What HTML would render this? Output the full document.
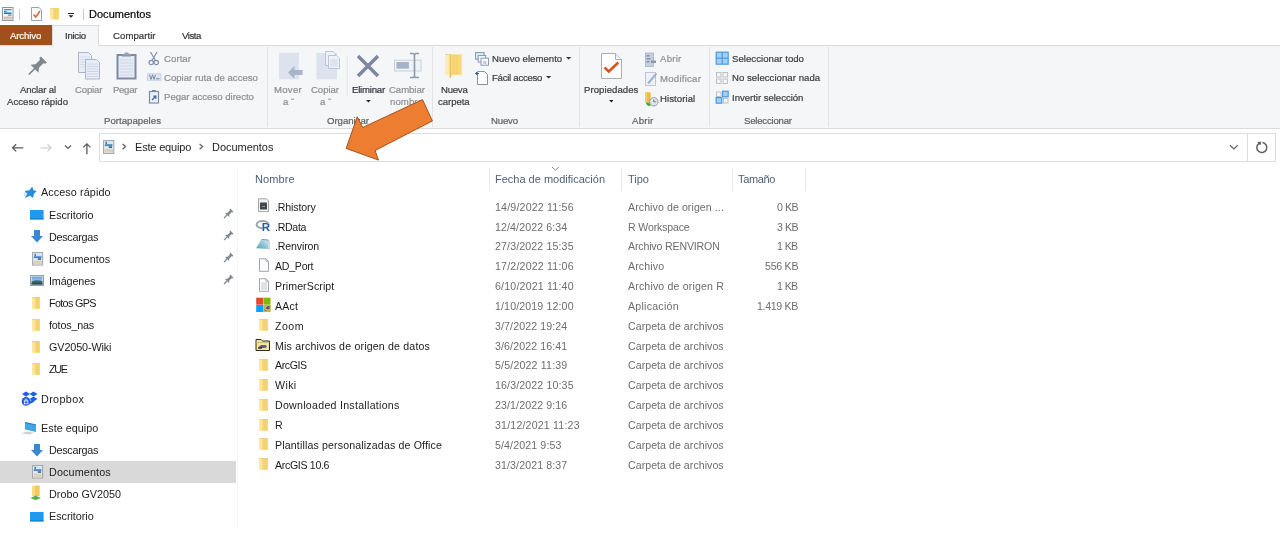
<!DOCTYPE html>
<html><head><meta charset="utf-8"><style>
html,body{margin:0;padding:0;width:1280px;height:538px;overflow:hidden;background:#fff;}
body{position:relative;font-family:"Liberation Sans",sans-serif;}
.t{position:absolute;white-space:nowrap;will-change:transform;}
.s{-webkit-text-stroke:0.2px currentColor;}
.r{position:absolute;}
</style></head><body>
<div class="r" style="left:0px;top:45px;width:1280px;height:83px;background:#f5f6f7;"></div>
<div class="r" style="left:0px;top:45px;width:1280px;height:1px;background:#dadbdc;"></div>
<div class="r" style="left:0px;top:128px;width:1280px;height:1px;background:#dadbdc;"></div>
<div class="r" style="left:52px;top:25px;width:47px;height:21px;background:#f5f6f7;border:1px solid #dadbdc;border-bottom:none;box-sizing:border-box;"></div>
<div class="r" style="left:0px;top:25px;width:52px;height:20px;background:#a0501d;"></div>
<div class="r" style="left:267px;top:47px;width:1px;height:80px;background:#e2e3e4;"></div>
<div class="r" style="left:432px;top:47px;width:1px;height:80px;background:#e2e3e4;"></div>
<div class="r" style="left:579px;top:47px;width:1px;height:80px;background:#e2e3e4;"></div>
<div class="r" style="left:709px;top:47px;width:1px;height:80px;background:#e2e3e4;"></div>
<div class="r" style="left:828px;top:47px;width:1px;height:80px;background:#e2e3e4;"></div>
<div class="r" style="left:19px;top:9px;width:1px;height:11px;background:#c9c9c9;"></div>
<div class="r" style="left:83px;top:9px;width:1px;height:11px;background:#c9c9c9;"></div>
<div class="r" style="left:99px;top:133px;width:1177px;height:29px;background:#fff;border:1px solid #dedede;box-sizing:border-box;"></div>
<div class="r" style="left:1247px;top:133px;width:1px;height:29px;background:#dedede;"></div>
<div class="r" style="left:0px;top:461px;width:236px;height:22px;background:#d9d9d9;"></div>
<div class="r" style="left:237px;top:168px;width:1px;height:360px;background:#f5f5f5;"></div>
<div class="r" style="left:489px;top:168px;width:1px;height:23px;background:#ebebeb;"></div>
<div class="r" style="left:621px;top:168px;width:1px;height:23px;background:#ebebeb;"></div>
<div class="r" style="left:732px;top:168px;width:1px;height:23px;background:#ebebeb;"></div>
<div class="r" style="left:805px;top:168px;width:1px;height:23px;background:#ebebeb;"></div>
<div class="t s" style="left:89.40px;top:7.69px;font-size:11px;line-height:13.2px;color:#000;letter-spacing:0.026px;">Documentos</div>
<div class="t s" style="left:10.00px;top:29.61px;font-size:9.6px;line-height:11.52px;color:#fff;letter-spacing:-0.119px;">Archivo</div>
<div class="t s" style="left:64.80px;top:29.61px;font-size:9.6px;line-height:11.52px;color:#333;letter-spacing:-0.263px;">Inicio</div>
<div class="t s" style="left:112.60px;top:29.61px;font-size:9.6px;line-height:11.52px;color:#333;letter-spacing:0.057px;">Compartir</div>
<div class="t s" style="left:181.90px;top:29.61px;font-size:9.6px;line-height:11.52px;color:#333;letter-spacing:-0.429px;">Vista</div>
<div class="t s" style="left:19.80px;top:83.91px;font-size:9.6px;line-height:11.52px;color:#3b3b3b;letter-spacing:-0.143px;">Anclar al</div>
<div class="t s" style="left:7.00px;top:95.91px;font-size:9.6px;line-height:11.52px;color:#3b3b3b;letter-spacing:0.015px;">Acceso rápido</div>
<div class="t s" style="left:75.00px;top:83.91px;font-size:9.6px;line-height:11.52px;color:#8e8e8e;letter-spacing:-0.174px;">Copiar</div>
<div class="t s" style="left:113.00px;top:83.91px;font-size:9.6px;line-height:11.52px;color:#8e8e8e;letter-spacing:-0.308px;">Pegar</div>
<div class="t s" style="left:163.80px;top:52.91px;font-size:9.6px;line-height:11.52px;color:#8e8e8e;letter-spacing:0.062px;">Cortar</div>
<div class="t s" style="left:163.80px;top:72.41px;font-size:9.6px;line-height:11.52px;color:#8e8e8e;letter-spacing:0.003px;">Copiar ruta de acceso</div>
<div class="t s" style="left:163.80px;top:91.41px;font-size:9.6px;line-height:11.52px;color:#8e8e8e;letter-spacing:-0.010px;">Pegar acceso directo</div>
<div class="t s" style="left:104.20px;top:114.91px;font-size:9.6px;line-height:11.52px;color:#5e5e5e;letter-spacing:0.037px;">Portapapeles</div>
<div class="t s" style="left:274.00px;top:83.91px;font-size:9.6px;line-height:11.52px;color:#8e8e8e;letter-spacing:0.253px;">Mover</div>
<div class="t s" style="left:282.70px;top:95.91px;font-size:9.6px;line-height:11.52px;color:#8e8e8e;">a ˇ</div>
<div class="t s" style="left:311.00px;top:83.91px;font-size:9.6px;line-height:11.52px;color:#8e8e8e;letter-spacing:-0.054px;">Copiar</div>
<div class="t s" style="left:319.50px;top:95.91px;font-size:9.6px;line-height:11.52px;color:#8e8e8e;">a ˇ</div>
<div class="t s" style="left:351.60px;top:83.91px;font-size:9.6px;line-height:11.52px;color:#2f2f3a;letter-spacing:-0.208px;">Eliminar</div>
<div class="t s" style="left:389.00px;top:83.91px;font-size:9.6px;line-height:11.52px;color:#8e8e8e;letter-spacing:-0.065px;">Cambiar</div>
<div class="t s" style="left:390.00px;top:95.91px;font-size:9.6px;line-height:11.52px;color:#8e8e8e;letter-spacing:0.091px;">nombre</div>
<div class="t s" style="left:327.00px;top:114.91px;font-size:9.6px;line-height:11.52px;color:#5e5e5e;letter-spacing:-0.018px;">Organizar</div>
<div class="t s" style="left:440.60px;top:83.91px;font-size:9.6px;line-height:11.52px;color:#3b3b3b;letter-spacing:-0.248px;">Nueva</div>
<div class="t s" style="left:438.00px;top:95.91px;font-size:9.6px;line-height:11.52px;color:#3b3b3b;letter-spacing:-0.061px;">carpeta</div>
<div class="t s" style="left:491.80px;top:52.91px;font-size:9.6px;line-height:11.52px;color:#3b3b3b;letter-spacing:0.024px;">Nuevo elemento</div>
<div class="t s" style="left:491.80px;top:72.41px;font-size:9.6px;line-height:11.52px;color:#3b3b3b;letter-spacing:-0.261px;">Fácil acceso</div>
<div class="t s" style="left:491.00px;top:114.91px;font-size:9.6px;line-height:11.52px;color:#5e5e5e;letter-spacing:-0.186px;">Nuevo</div>
<div class="t s" style="left:583.80px;top:83.91px;font-size:9.6px;line-height:11.52px;color:#3b3b3b;letter-spacing:0.050px;">Propiedades</div>
<div class="t s" style="left:659.80px;top:53.41px;font-size:9.6px;line-height:11.52px;color:#8e8e8e;letter-spacing:0.236px;">Abrir</div>
<div class="t s" style="left:659.80px;top:72.91px;font-size:9.6px;line-height:11.52px;color:#8e8e8e;letter-spacing:0.247px;">Modificar</div>
<div class="t s" style="left:659.80px;top:93.41px;font-size:9.6px;line-height:11.52px;color:#3b3b3b;letter-spacing:0.068px;">Historial</div>
<div class="t s" style="left:632.40px;top:114.91px;font-size:9.6px;line-height:11.52px;color:#5e5e5e;letter-spacing:0.236px;">Abrir</div>
<div class="t s" style="left:731.80px;top:52.91px;font-size:9.6px;line-height:11.52px;color:#3b3b3b;letter-spacing:0.032px;">Seleccionar todo</div>
<div class="t s" style="left:731.80px;top:72.41px;font-size:9.6px;line-height:11.52px;color:#3b3b3b;letter-spacing:0.036px;">No seleccionar nada</div>
<div class="t s" style="left:731.80px;top:92.21px;font-size:9.6px;line-height:11.52px;color:#3b3b3b;letter-spacing:-0.032px;">Invertir selección</div>
<div class="t s" style="left:743.80px;top:114.91px;font-size:9.6px;line-height:11.52px;color:#5e5e5e;letter-spacing:-0.216px;">Seleccionar</div>
<div class="t" style="left:134.70px;top:140.69px;font-size:11px;line-height:13.2px;color:#1e1e1e;letter-spacing:-0.178px;">Este equipo</div>
<div class="t" style="left:211.70px;top:140.69px;font-size:11px;line-height:13.2px;color:#1e1e1e;letter-spacing:-0.041px;">Documentos</div>
<div class="t" style="left:255.30px;top:172.79px;font-size:11px;line-height:13.2px;color:#4f5f75;letter-spacing:0.119px;">Nombre</div>
<div class="t" style="left:494.80px;top:172.79px;font-size:11px;line-height:13.2px;color:#4f5f75;letter-spacing:-0.003px;">Fecha de modificación</div>
<div class="t" style="left:627.80px;top:172.79px;font-size:11px;line-height:13.2px;color:#4f5f75;">Tipo</div>
<div class="t" style="left:738.00px;top:172.79px;font-size:11px;line-height:13.2px;color:#4f5f75;letter-spacing:-0.332px;">Tamaño</div>
<div class="t" style="left:275.00px;top:200.67px;font-size:10.6px;line-height:12.72px;color:#1b1b1b;letter-spacing:-0.127px;">.Rhistory</div>
<div class="t" style="left:495.20px;top:200.67px;font-size:10.6px;line-height:12.72px;color:#6d6d6d;letter-spacing:0.197px;">14/9/2022 11:56</div>
<div class="t" style="left:627.80px;top:200.67px;font-size:10.6px;line-height:12.72px;color:#6d6d6d;letter-spacing:0.081px;">Archivo de origen ...</div>
<div class="t" style="left:776.70px;top:200.67px;font-size:10.6px;line-height:12.72px;color:#6d6d6d;letter-spacing:-0.434px;">0 KB</div>
<div class="t" style="left:275.00px;top:220.52px;font-size:10.6px;line-height:12.72px;color:#1b1b1b;letter-spacing:-0.304px;">.RData</div>
<div class="t" style="left:495.20px;top:220.52px;font-size:10.6px;line-height:12.72px;color:#6d6d6d;letter-spacing:0.119px;">12/4/2022 6:34</div>
<div class="t" style="left:627.80px;top:220.52px;font-size:10.6px;line-height:12.72px;color:#6d6d6d;letter-spacing:-0.164px;">R Workspace</div>
<div class="t" style="left:776.70px;top:220.52px;font-size:10.6px;line-height:12.72px;color:#6d6d6d;letter-spacing:-0.434px;">3 KB</div>
<div class="t" style="left:275.00px;top:240.37px;font-size:10.6px;line-height:12.72px;color:#1b1b1b;letter-spacing:-0.146px;">.Renviron</div>
<div class="t" style="left:495.20px;top:240.37px;font-size:10.6px;line-height:12.72px;color:#6d6d6d;letter-spacing:0.140px;">27/3/2022 15:35</div>
<div class="t" style="left:627.80px;top:240.37px;font-size:10.6px;line-height:12.72px;color:#6d6d6d;letter-spacing:-0.156px;">Archivo RENVIRON</div>
<div class="t" style="left:777.20px;top:240.37px;font-size:10.6px;line-height:12.72px;color:#6d6d6d;letter-spacing:-0.601px;">1 KB</div>
<div class="t" style="left:275.00px;top:260.22px;font-size:10.6px;line-height:12.72px;color:#1b1b1b;letter-spacing:-0.245px;">AD_Port</div>
<div class="t" style="left:495.20px;top:260.22px;font-size:10.6px;line-height:12.72px;color:#6d6d6d;letter-spacing:0.197px;">17/2/2022 11:06</div>
<div class="t" style="left:627.80px;top:260.22px;font-size:10.6px;line-height:12.72px;color:#6d6d6d;letter-spacing:0.125px;">Archivo</div>
<div class="t" style="left:764.90px;top:260.22px;font-size:10.6px;line-height:12.72px;color:#6d6d6d;letter-spacing:-0.254px;">556 KB</div>
<div class="t" style="left:275.00px;top:280.07px;font-size:10.6px;line-height:12.72px;color:#1b1b1b;letter-spacing:0.091px;">PrimerScript</div>
<div class="t" style="left:495.20px;top:280.07px;font-size:10.6px;line-height:12.72px;color:#6d6d6d;letter-spacing:0.197px;">6/10/2021 11:40</div>
<div class="t" style="left:627.80px;top:280.07px;font-size:10.6px;line-height:12.72px;color:#6d6d6d;letter-spacing:0.154px;">Archivo de origen R</div>
<div class="t" style="left:777.20px;top:280.07px;font-size:10.6px;line-height:12.72px;color:#6d6d6d;letter-spacing:-0.601px;">1 KB</div>
<div class="t" style="left:275.00px;top:299.92px;font-size:10.6px;line-height:12.72px;color:#1b1b1b;letter-spacing:0.211px;">AAct</div>
<div class="t" style="left:495.20px;top:299.92px;font-size:10.6px;line-height:12.72px;color:#6d6d6d;letter-spacing:0.140px;">1/10/2019 12:00</div>
<div class="t" style="left:627.80px;top:299.92px;font-size:10.6px;line-height:12.72px;color:#6d6d6d;letter-spacing:0.252px;">Aplicación</div>
<div class="t" style="left:757.10px;top:299.92px;font-size:10.6px;line-height:12.72px;color:#6d6d6d;letter-spacing:-0.331px;">1.419 KB</div>
<div class="t" style="left:275.00px;top:319.77px;font-size:10.6px;line-height:12.72px;color:#1b1b1b;letter-spacing:0.506px;">Zoom</div>
<div class="t" style="left:495.20px;top:319.77px;font-size:10.6px;line-height:12.72px;color:#6d6d6d;letter-spacing:0.119px;">3/7/2022 19:24</div>
<div class="t" style="left:627.80px;top:319.77px;font-size:10.6px;line-height:12.72px;color:#6d6d6d;letter-spacing:0.046px;">Carpeta de archivos</div>
<div class="t" style="left:275.00px;top:339.62px;font-size:10.6px;line-height:12.72px;color:#1b1b1b;letter-spacing:0.178px;">Mis archivos de origen de datos</div>
<div class="t" style="left:495.20px;top:339.62px;font-size:10.6px;line-height:12.72px;color:#6d6d6d;letter-spacing:0.119px;">3/6/2022 16:41</div>
<div class="t" style="left:627.80px;top:339.62px;font-size:10.6px;line-height:12.72px;color:#6d6d6d;letter-spacing:0.046px;">Carpeta de archivos</div>
<div class="t" style="left:275.00px;top:359.47px;font-size:10.6px;line-height:12.72px;color:#1b1b1b;letter-spacing:-0.417px;">ArcGIS</div>
<div class="t" style="left:495.20px;top:359.47px;font-size:10.6px;line-height:12.72px;color:#6d6d6d;letter-spacing:0.180px;">5/5/2022 11:39</div>
<div class="t" style="left:627.80px;top:359.47px;font-size:10.6px;line-height:12.72px;color:#6d6d6d;letter-spacing:0.046px;">Carpeta de archivos</div>
<div class="t" style="left:275.00px;top:379.32px;font-size:10.6px;line-height:12.72px;color:#1b1b1b;letter-spacing:0.389px;">Wiki</div>
<div class="t" style="left:495.20px;top:379.32px;font-size:10.6px;line-height:12.72px;color:#6d6d6d;letter-spacing:0.140px;">16/3/2022 10:35</div>
<div class="t" style="left:627.80px;top:379.32px;font-size:10.6px;line-height:12.72px;color:#6d6d6d;letter-spacing:0.046px;">Carpeta de archivos</div>
<div class="t" style="left:275.00px;top:399.17px;font-size:10.6px;line-height:12.72px;color:#1b1b1b;letter-spacing:0.284px;">Downloaded Installations</div>
<div class="t" style="left:495.20px;top:399.17px;font-size:10.6px;line-height:12.72px;color:#6d6d6d;letter-spacing:0.119px;">23/1/2022 9:16</div>
<div class="t" style="left:627.80px;top:399.17px;font-size:10.6px;line-height:12.72px;color:#6d6d6d;letter-spacing:0.046px;">Carpeta de archivos</div>
<div class="t" style="left:275.00px;top:419.02px;font-size:10.6px;line-height:12.72px;color:#1b1b1b;">R</div>
<div class="t" style="left:495.20px;top:419.02px;font-size:10.6px;line-height:12.72px;color:#6d6d6d;letter-spacing:0.192px;">31/12/2021 11:23</div>
<div class="t" style="left:627.80px;top:419.02px;font-size:10.6px;line-height:12.72px;color:#6d6d6d;letter-spacing:0.046px;">Carpeta de archivos</div>
<div class="t" style="left:275.00px;top:438.87px;font-size:10.6px;line-height:12.72px;color:#1b1b1b;letter-spacing:0.151px;">Plantillas personalizadas de Office</div>
<div class="t" style="left:495.20px;top:438.87px;font-size:10.6px;line-height:12.72px;color:#6d6d6d;letter-spacing:0.132px;">5/4/2021 9:53</div>
<div class="t" style="left:627.80px;top:438.87px;font-size:10.6px;line-height:12.72px;color:#6d6d6d;letter-spacing:0.046px;">Carpeta de archivos</div>
<div class="t" style="left:275.00px;top:458.72px;font-size:10.6px;line-height:12.72px;color:#1b1b1b;letter-spacing:-0.322px;">ArcGIS 10.6</div>
<div class="t" style="left:495.20px;top:458.72px;font-size:10.6px;line-height:12.72px;color:#6d6d6d;letter-spacing:0.119px;">31/3/2021 8:37</div>
<div class="t" style="left:627.80px;top:458.72px;font-size:10.6px;line-height:12.72px;color:#6d6d6d;letter-spacing:0.046px;">Carpeta de archivos</div>
<div class="t" style="left:40.90px;top:186.48px;font-size:10.8px;line-height:12.96px;color:#1b1b1b;letter-spacing:0.090px;">Acceso rápido</div>
<div class="t" style="left:48.60px;top:208.58px;font-size:10.8px;line-height:12.96px;color:#1b1b1b;letter-spacing:-0.060px;">Escritorio</div>
<div class="t" style="left:48.60px;top:230.58px;font-size:10.8px;line-height:12.96px;color:#1b1b1b;letter-spacing:-0.291px;">Descargas</div>
<div class="t" style="left:48.60px;top:252.58px;font-size:10.8px;line-height:12.96px;color:#1b1b1b;letter-spacing:0.073px;">Documentos</div>
<div class="t" style="left:48.60px;top:274.58px;font-size:10.8px;line-height:12.96px;color:#1b1b1b;letter-spacing:-0.145px;">Imágenes</div>
<div class="t" style="left:48.50px;top:296.58px;font-size:10.8px;line-height:12.96px;color:#1b1b1b;letter-spacing:-0.676px;">Fotos GPS</div>
<div class="t" style="left:48.50px;top:318.58px;font-size:10.8px;line-height:12.96px;color:#1b1b1b;letter-spacing:-0.202px;">fotos_nas</div>
<div class="t" style="left:48.50px;top:340.58px;font-size:10.8px;line-height:12.96px;color:#1b1b1b;letter-spacing:-0.111px;">GV2050-Wiki</div>
<div class="t" style="left:48.50px;top:362.98px;font-size:10.8px;line-height:12.96px;color:#1b1b1b;letter-spacing:-1.350px;">ZUE</div>
<div class="t" style="left:41.20px;top:392.78px;font-size:10.8px;line-height:12.96px;color:#1b1b1b;letter-spacing:0.346px;">Dropbox</div>
<div class="t" style="left:41.20px;top:421.98px;font-size:10.8px;line-height:12.96px;color:#1b1b1b;letter-spacing:0.028px;">Este equipo</div>
<div class="t" style="left:48.50px;top:444.18px;font-size:10.8px;line-height:12.96px;color:#1b1b1b;letter-spacing:-0.278px;">Descargas</div>
<div class="t" style="left:48.50px;top:466.18px;font-size:10.8px;line-height:12.96px;color:#1b1b1b;letter-spacing:0.118px;">Documentos</div>
<div class="t" style="left:48.50px;top:488.18px;font-size:10.8px;line-height:12.96px;color:#1b1b1b;letter-spacing:0.006px;">Drobo GV2050</div>
<div class="t" style="left:48.50px;top:510.18px;font-size:10.8px;line-height:12.96px;color:#1b1b1b;letter-spacing:-0.037px;">Escritorio</div>
<svg class="r" style="left:2px;top:7px" width="12" height="14" viewBox="0 0 12 14"><rect x="0.5" y="0.5" width="10.5" height="13" fill="#f4f6f8" stroke="#8b96a3"/>
<rect x="2" y="2" width="7.5" height="1.3" fill="#3f8fd6"/><rect x="2" y="4" width="3" height="1.3" fill="#3f8fd6"/>
<rect x="2" y="5.5" width="7.5" height="1.5" fill="#2f6fb0"/><rect x="6" y="7.5" width="3.5" height="1.2" fill="#3f8fd6"/>
<rect x="1.5" y="9.5" width="8.5" height="3" fill="#cfc6bb"/></svg>
<svg class="r" style="left:31px;top:7px" width="12" height="15" viewBox="0 0 12 15"><path d="M0.5 0.5H8L10.5 3V13.5H0.5Z" fill="#fff" stroke="#9aa1a8"/>
<path d="M2.5 7.5L4.8 10L9 4" fill="none" stroke="#d9643a" stroke-width="1.6"/></svg>
<svg class="r" style="left:50px;top:8.4px" width="9.8" height="12" viewBox="0 0 9.8 12"><rect x="0" y="0.5" width="8.8" height="11" fill="#fce6a2"/>
<rect x="3.168" y="0.4" width="5.632000000000001" height="11" fill="#f6d574"/>
<rect x="0" y="0" width="8.8" height="1" fill="#eec766" opacity="0.7"/>
<rect x="5.28" y="1" width="0.7" height="10" fill="#efc65c" opacity="0.6"/></svg>
<svg class="r" style="left:67px;top:12px" width="8" height="7" viewBox="0 0 8 7"><rect x="1" y="1" width="6" height="1" fill="#222"/><path d="M1.5 3.2H6.5L4 5.8Z" fill="#222"/></svg>
<svg class="r" style="left:0;top:0" width="60" height="90" viewBox="0 0 60 90"><g transform="translate(36.4 66.9) rotate(45)" fill="#7b868f"><path d="M-4.2 -10.5L4.2 -10.5L4.2 -8.6L2.4 -7.4L2.4 -1.2L5.6 2.6L-5.6 2.6L-2.4 -1.2L-2.4 -7.4L-4.2 -8.6Z"/><rect x="-0.8" y="2" width="1.6" height="8.8"/></g></svg>
<svg class="r" style="left:77px;top:51px" width="25" height="30" viewBox="0 0 25 30"><path d="M1.5 1.5H11.5L14.5 4.5V21.5H1.5Z" fill="#e8eef7" stroke="#aab6c8"/>
<g stroke="#cfd8e4" stroke-width="0.8"><line x1="3" y1="6" x2="13" y2="6"/><line x1="3" y1="8.5" x2="13" y2="8.5"/><line x1="3" y1="11" x2="13" y2="11"/><line x1="3" y1="13.5" x2="13" y2="13.5"/><line x1="3" y1="16" x2="13" y2="16"/></g>
<path d="M8.5 8.5H19.5L22.5 11.5V28H8.5Z" fill="#e8eef7" stroke="#aab6c8"/>
<g stroke="#c4cedc" stroke-width="0.8"><line x1="10" y1="13" x2="21" y2="13"/><line x1="10" y1="15.5" x2="21" y2="15.5"/><line x1="10" y1="18" x2="21" y2="18"/><line x1="10" y1="20.5" x2="21" y2="20.5"/><line x1="10" y1="23" x2="21" y2="23"/><line x1="10" y1="25.5" x2="21" y2="25.5"/></g></svg>
<svg class="r" style="left:116px;top:51px" width="21" height="29" viewBox="0 0 21 29"><rect x="1.5" y="4" width="18" height="23.5" fill="#e4ebf6" stroke="#7e8ba6" stroke-width="2"/>
<path d="M7 4.5L9 1.5H12L14 4.5Z" fill="#9aa6bb"/><rect x="6" y="3.5" width="9" height="2" fill="#8e9ab0"/>
<g stroke="#c9d3e2" stroke-width="0.8"><line x1="4" y1="9" x2="17" y2="9"/><line x1="4" y1="12" x2="17" y2="12"/><line x1="4" y1="15" x2="17" y2="15"/><line x1="4" y1="18" x2="17" y2="18"/><line x1="4" y1="21" x2="17" y2="21"/><line x1="4" y1="24" x2="17" y2="24"/></g></svg>
<svg class="r" style="left:148px;top:51px" width="12" height="15" viewBox="0 0 12 15"><g fill="none" stroke="#7f8fae" stroke-width="1.2"><line x1="2.5" y1="1" x2="7.5" y2="9.5"/><line x1="9" y1="1" x2="4" y2="9.5"/>
<circle cx="3.2" cy="11.5" r="2.2"/><circle cx="8.3" cy="11.5" r="2.2"/></g></svg>
<svg class="r" style="left:147px;top:73px" width="15" height="9" viewBox="0 0 15 9"><rect x="0.5" y="0.8" width="13.5" height="6.5" fill="#dde5f2" stroke="#c3cee0" stroke-width="0.8"/>
<path d="M2.5 1.8L4 6.3L5.5 1.8M5.5 1.8L7 6.3L8.5 1.8" fill="none" stroke="#6f7f9c" stroke-width="0.9"/><line x1="9" y1="5.8" x2="12.5" y2="5.8" stroke="#6f7f9c" stroke-width="0.9"/></svg>
<svg class="r" style="left:148px;top:89px" width="12" height="15" viewBox="0 0 12 15"><rect x="1.5" y="2.5" width="9" height="11.5" fill="#eef2f8" stroke="#7e8ba6" stroke-width="1.2"/>
<rect x="4" y="1" width="4" height="2" fill="#7e8ba6"/>
<path d="M4 11L7.5 7.5M5.2 7.2H7.8V9.8" fill="none" stroke="#3d6aa6" stroke-width="1.3"/></svg>
<svg class="r" style="left:278px;top:52px" width="26" height="28" viewBox="0 0 26 28"><rect x="1" y="0.8" width="20" height="26.5" fill="#dce3ee"/>
<path d="M10 20.4L16.5 14V17.9H24.6V23H16.5V27Z" fill="#a8b5c9"/></svg>
<svg class="r" style="left:316px;top:50px" width="26" height="30" viewBox="0 0 26 30"><rect x="0.4" y="3" width="20.6" height="26.3" fill="#dce3ee"/>
<path d="M9.5 1.5H17L19.5 4V15.5H9.5Z" fill="#eef2f8" stroke="#b3bfd1" stroke-width="0.9"/>
<path d="M12.5 5.5H20.5L23.5 8.5V18.5H12.5Z" fill="#eef2f8" stroke="#b3bfd1" stroke-width="0.9"/>
<g stroke="#c3cddc" stroke-width="0.7"><line x1="14" y1="10" x2="22" y2="10"/><line x1="14" y1="12" x2="22" y2="12"/><line x1="14" y1="14" x2="22" y2="14"/><line x1="14" y1="16" x2="22" y2="16"/></g></svg>
<div class="r" style="left:347px;top:56px;width:1px;height:40px;background:#e6e7e8;"></div>
<svg class="r" style="left:356px;top:54px" width="24" height="24" viewBox="0 0 24 24"><path d="M2 2L22 22M22 2L2 22" stroke="#7b87a1" stroke-width="3.4"/></svg>
<svg class="r" style="left:393px;top:52px" width="29" height="27" viewBox="0 0 29 27"><rect x="1.5" y="8.2" width="26.5" height="10.8" fill="#f0f3f8" stroke="#c6cfdc" stroke-width="1"/>
<rect x="3.4" y="10" width="12.5" height="6.6" fill="#a5b2c7"/>
<path d="M17 1.5H19.7Q21.5 1.5 21.5 3.3V23.7Q21.5 25.5 19.7 25.5H17M26 1.5H23.3Q21.5 1.5 21.5 3.3M21.5 23.7Q21.5 25.5 23.3 25.5H26" fill="none" stroke="#8d9ab0" stroke-width="1.6"/></svg>
<svg class="r" style="left:444px;top:53px" width="19" height="27" viewBox="0 0 19 27"><path d="M1 1H17.6V21.8H1Z" fill="#fdebb2"/>
<path d="M5.7 1.5H17.6V21.8H8.8L5.7 25.5Z" fill="#f8d878"/>
<path d="M5.7 1.5H7V24L5.7 25.5Z" fill="#eec25a"/>
<path d="M1 1H6V2H1Z" fill="#f1d68a"/>
<g stroke="#efc866" stroke-width="0.7"><line x1="10" y1="2" x2="10" y2="21"/><line x1="13" y1="2" x2="13" y2="21"/></g></svg>
<svg class="r" style="left:475px;top:52px" width="15" height="14" viewBox="0 0 15 14"><rect x="0.6" y="0.6" width="8.5" height="6.5" fill="#e8eef5" stroke="#7f9cb6" stroke-width="1.1"/>
<rect x="3.2" y="3.5" width="7.5" height="6.5" fill="#f3f6fa" stroke="#7f9cb6" stroke-width="1"/>
<rect x="6" y="6.2" width="7.5" height="7" fill="#fafbfd" stroke="#8d9cb0" stroke-width="1"/>
<rect x="8" y="9" width="3.5" height="3" fill="#c6d0dc"/></svg>
<svg class="r" style="left:475px;top:70px" width="15" height="16" viewBox="0 0 15 16"><path d="M2.5 1.5H9.5L12.5 4.5V14.5H2.5Z" fill="#fff" stroke="#8a929c" stroke-width="1"/>
<path d="M0.5 3.5H4M2 2L0.5 3.5L2 5" fill="none" stroke="#3a5f8f" stroke-width="1"/></svg>
<svg class="r" style="left:600px;top:52px" width="23" height="28" viewBox="0 0 23 28"><path d="M1.5 1.5H15.5L21.5 7.5V26.5H1.5Z" fill="#fff" stroke="#a9afb5" stroke-width="1"/>
<path d="M15.5 1.5V7.5H21.5" fill="#eef0f2" stroke="#a9afb5" stroke-width="1"/>
<path d="M4.5 15.5L8.8 19.5L18.3 10.5" fill="none" stroke="#d9541e" stroke-width="2.6"/></svg>
<svg class="r" style="left:644px;top:52px" width="14" height="16" viewBox="0 0 14 16"><rect x="1.5" y="1" width="8" height="13.5" fill="#c5cfdd" stroke="#a6b3c6" stroke-width="0.8"/>
<g fill="#8797b0"><rect x="2.5" y="3" width="3" height="1.5"/><rect x="2.5" y="6" width="4" height="1.5"/><rect x="2.5" y="9" width="3" height="1.5"/><rect x="7" y="8.5" width="5" height="2.5"/></g></svg>
<svg class="r" style="left:644px;top:71px" width="14" height="16" viewBox="0 0 14 16"><rect x="1.5" y="1.5" width="10" height="13" fill="#eef2f8" stroke="#b6c1d2" stroke-width="0.9"/>
<path d="M4 12.5L12.5 2.5" stroke="#9fb1c9" stroke-width="2"/></svg>
<svg class="r" style="left:644px;top:91px" width="15" height="16" viewBox="0 0 15 16"><path d="M1 1H6.5V12H1Z" fill="#f5cd60"/><path d="M3 2H6.5V12H3Z" fill="#eebb45"/>
<circle cx="9.8" cy="10.8" r="4.2" fill="#dfe4ea" stroke="#8a96a5" stroke-width="0.9"/>
<path d="M9.8 8.5V10.8H11.8" fill="none" stroke="#55616f" stroke-width="0.8"/>
<path d="M2 11.5A3.5 3.5 0 0 0 6.5 14.8L6 12.5" fill="#3aa245"/></svg>
<svg class="r" style="left:715px;top:51px" width="15" height="15" viewBox="0 0 15 15"><rect x="0.6" y="0.6" width="13.2" height="13.2" fill="#4a9be0"/>
<g fill="#9fd0f7"><rect x="1.8" y="1.8" width="4.8" height="4.8"/><rect x="7.8" y="1.8" width="4.8" height="4.8"/><rect x="1.8" y="7.8" width="4.8" height="4.8"/><rect x="7.8" y="7.8" width="4.8" height="4.8"/></g></svg>
<svg class="r" style="left:715px;top:71px" width="15" height="14" viewBox="0 0 15 14"><g fill="none" stroke="#b9bcc0" stroke-width="0.9"><rect x="1.5" y="1.5" width="4.5" height="4.5"/><rect x="8" y="1.5" width="4.5" height="4.5"/><rect x="1.5" y="8" width="4.5" height="4.5"/><rect x="8" y="8" width="4.5" height="4.5"/></g></svg>
<svg class="r" style="left:715px;top:90px" width="15" height="15" viewBox="0 0 15 15"><g fill="none" stroke="#b9bcc0" stroke-width="0.9"><rect x="1.5" y="2" width="4.5" height="4.5"/><rect x="8.5" y="8.5" width="4.5" height="4.5"/></g>
<rect x="7" y="0.6" width="6.8" height="6.8" fill="#4a9be0"/><rect x="8.2" y="1.8" width="4.4" height="4.4" fill="#9fd0f7"/>
<rect x="0.6" y="7" width="6.8" height="6.8" fill="#4a9be0"/><rect x="1.8" y="8.2" width="4.4" height="4.4" fill="#9fd0f7"/></svg>
<svg class="r" style="left:365.8px;top:99.5px" width="4.8" height="3.4" viewBox="0 0 4.8 3.4"><path d="M0 0H4.8L2.4 2.4Z" fill="#222"/></svg>
<svg class="r" style="left:608.6px;top:99.5px" width="4.8" height="3.4" viewBox="0 0 4.8 3.4"><path d="M0 0H4.8L2.4 2.4Z" fill="#222"/></svg>
<svg class="r" style="left:565.9px;top:56.6px" width="5.2" height="3.6" viewBox="0 0 5.2 3.6"><path d="M0 0H5.2L2.6 2.6Z" fill="#333"/></svg>
<svg class="r" style="left:546.0px;top:75.6px" width="5.2" height="3.6" viewBox="0 0 5.2 3.6"><path d="M0 0H5.2L2.6 2.6Z" fill="#333"/></svg>
<svg class="r" style="left:11px;top:142px" width="14" height="12" viewBox="0 0 14 12"><path d="M12.3 5.8H1.6M5.2 2.2L1.6 5.8L5.2 9.4" fill="none" stroke="#5b5b5b" stroke-width="1.3"/></svg>
<svg class="r" style="left:39px;top:142px" width="14" height="12" viewBox="0 0 14 12"><path d="M1.4 5.8H12.1M8.5 2.2L12.1 5.8L8.5 9.4" fill="none" stroke="#d2d2d2" stroke-width="1.3"/></svg>
<svg class="r" style="left:64px;top:144px" width="8" height="7" viewBox="0 0 8 7"><path d="M1 1.5L4 4.5L7 1.5" fill="none" stroke="#5b5b5b" stroke-width="1.2"/></svg>
<svg class="r" style="left:82px;top:142px" width="10" height="13" viewBox="0 0 10 13"><path d="M4.9 12.2V1.8M1.3 5.4L4.9 1.8L8.5 5.4" fill="none" stroke="#5b5b5b" stroke-width="1.3"/></svg>
<svg class="r" style="left:102px;top:139px" width="13" height="16" viewBox="0 0 13 16"><rect x="1.6" y="1.6" width="10.2" height="12.8" fill="#f2f6fa" stroke="#a3a6aa" stroke-width="1.1"/>
<rect x="2.4" y="2.4" width="8.6" height="6.6" fill="#cfe6f8"/>
<rect x="3.6" y="2.6" width="1.2" height="2.4" fill="#2c5f8e"/><rect x="2.8" y="5.4" width="7.6" height="1.4" fill="#2b6cb0"/><rect x="6.8" y="7.4" width="3.2" height="1.6" fill="#2c5f8e"/>
<rect x="2.4" y="9.6" width="8.6" height="4" fill="#dcd0be"/></svg>
<svg class="r" style="left:121px;top:143px" width="7" height="8" viewBox="0 0 7 8"><path d="M1.6 0.9L4.6 3.6L1.6 6.3" fill="none" stroke="#666" stroke-width="1.3"/></svg>
<svg class="r" style="left:198px;top:143px" width="7" height="8" viewBox="0 0 7 8"><path d="M1.6 0.9L4.6 3.6L1.6 6.3" fill="none" stroke="#666" stroke-width="1.3"/></svg>
<svg class="r" style="left:1229px;top:144px" width="10" height="7" viewBox="0 0 10 7"><path d="M1 1.2L4.9 5L8.8 1.2" fill="none" stroke="#666" stroke-width="1.2"/></svg>
<svg class="r" style="left:1255px;top:140px" width="15" height="15" viewBox="0 0 15 15"><path d="M4.2 3.3A5 5 0 1 0 7.5 2.6" fill="none" stroke="#5e5e5e" stroke-width="1.5"/><path d="M2.3 2.2L6.3 1.6L5.4 5.6Z" fill="#5e5e5e"/></svg>
<svg class="r" style="left:551px;top:166px" width="9" height="5" viewBox="0 0 9 5"><path d="M1 1L4.5 4.2L8 1" fill="none" stroke="#8a8f96" stroke-width="1"/></svg>
<svg class="r" style="left:0;top:0" width="40" height="200" viewBox="0 0 40 200"><path d="M32.1 187.1L33.4 190.6L36.3 191.2L33.9 193.6L32.7 197.6L30 195.4L25.3 197.6L27.5 194L25.1 191L29.2 190.7Z" fill="#2390e2" stroke="#2f76b8" stroke-width="0.5"/><g stroke="#8cc3ef" stroke-width="0.8"><line x1="23.5" y1="193.5" x2="25.5" y2="192.5"/><line x1="24" y1="195.6" x2="26" y2="194.6"/></g></svg>
<svg class="r" style="left:30px;top:210px" width="14" height="10" viewBox="0 0 14 10"><rect x="0" y="0" width="13.6" height="9.4" fill="#1e9bf0"/><rect x="0" y="8.4" width="13.6" height="1" fill="#1677c4"/></svg>
<svg class="r" style="left:30px;top:511.5px" width="14" height="10" viewBox="0 0 14 10"><rect x="0" y="0" width="13.6" height="9.4" fill="#1e9bf0"/><rect x="0" y="8.4" width="13.6" height="1" fill="#1677c4"/></svg>
<svg class="r" style="left:31px;top:230px" width="12" height="13" viewBox="0 0 12 13"><path d="M3 0H9V6H12L6 12.4L0 6H3Z" fill="#3a87d6"/></svg>
<svg class="r" style="left:31px;top:444px" width="12" height="13" viewBox="0 0 12 13"><path d="M3 0H9V6H12L6 12.4L0 6H3Z" fill="#3a87d6"/></svg>
<svg class="r" style="left:31.5px;top:251.5px" width="12" height="14" viewBox="0 0 12 14"><rect x="0.6" y="0.6" width="10" height="12.4" fill="#f2f6fa" stroke="#a3a6aa" stroke-width="1.1"/>
<rect x="1.4" y="1.4" width="8.4" height="6.4" fill="#cfe6f8"/>
<rect x="2.6" y="1.8" width="1.2" height="2.2" fill="#2c5f8e"/><rect x="1.8" y="4.4" width="7.6" height="1.4" fill="#2b6cb0"/><rect x="5.8" y="6.3" width="3.2" height="1.5" fill="#2c5f8e"/>
<rect x="1.4" y="8.4" width="8.4" height="4" fill="#dcd0be"/></svg>
<svg class="r" style="left:31.5px;top:464.5px" width="12" height="14" viewBox="0 0 12 14"><rect x="0.6" y="0.6" width="10" height="12.4" fill="#f2f6fa" stroke="#a3a6aa" stroke-width="1.1"/>
<rect x="1.4" y="1.4" width="8.4" height="6.4" fill="#cfe6f8"/>
<rect x="2.6" y="1.8" width="1.2" height="2.2" fill="#2c5f8e"/><rect x="1.8" y="4.4" width="7.6" height="1.4" fill="#2b6cb0"/><rect x="5.8" y="6.3" width="3.2" height="1.5" fill="#2c5f8e"/>
<rect x="1.4" y="8.4" width="8.4" height="4" fill="#dcd0be"/></svg>
<svg class="r" style="left:30px;top:275px" width="14" height="11" viewBox="0 0 14 11"><defs><linearGradient id="sky" x1="0" y1="0" x2="0" y2="1"><stop offset="0" stop-color="#6b9fd8"/><stop offset="1" stop-color="#cfe3f5"/></linearGradient></defs>
<rect x="0.5" y="0.5" width="13" height="10" fill="#f4f4f4" stroke="#9aa0a6" stroke-width="1"/>
<rect x="1.5" y="1.5" width="11" height="8" fill="url(#sky)"/><path d="M1.5 6.5Q6 4.2 12.5 6V9.5H1.5Z" fill="#3a6a78"/><path d="M1.5 8.2Q7 6.5 12.5 8.2V9.5H1.5Z" fill="#2d5248"/></svg>
<svg class="r" style="left:32px;top:296.5px" width="9" height="12.3" viewBox="0 0 9 12.3"><rect x="0" y="0.5" width="8" height="11.3" fill="#fce6a2"/>
<rect x="2.88" y="0.4" width="5.12" height="11.3" fill="#f6d574"/>
<rect x="0" y="0" width="8" height="1" fill="#eec766" opacity="0.7"/>
<rect x="4.8" y="1" width="0.7" height="10.3" fill="#efc65c" opacity="0.6"/></svg>
<svg class="r" style="left:32px;top:318.5px" width="9" height="12.3" viewBox="0 0 9 12.3"><rect x="0" y="0.5" width="8" height="11.3" fill="#fce6a2"/>
<rect x="2.88" y="0.4" width="5.12" height="11.3" fill="#f6d574"/>
<rect x="0" y="0" width="8" height="1" fill="#eec766" opacity="0.7"/>
<rect x="4.8" y="1" width="0.7" height="10.3" fill="#efc65c" opacity="0.6"/></svg>
<svg class="r" style="left:32px;top:340.5px" width="9" height="12.3" viewBox="0 0 9 12.3"><rect x="0" y="0.5" width="8" height="11.3" fill="#fce6a2"/>
<rect x="2.88" y="0.4" width="5.12" height="11.3" fill="#f6d574"/>
<rect x="0" y="0" width="8" height="1" fill="#eec766" opacity="0.7"/>
<rect x="4.8" y="1" width="0.7" height="10.3" fill="#efc65c" opacity="0.6"/></svg>
<svg class="r" style="left:32px;top:362.7px" width="9" height="12.3" viewBox="0 0 9 12.3"><rect x="0" y="0.5" width="8" height="11.3" fill="#fce6a2"/>
<rect x="2.88" y="0.4" width="5.12" height="11.3" fill="#f6d574"/>
<rect x="0" y="0" width="8" height="1" fill="#eec766" opacity="0.7"/>
<rect x="4.8" y="1" width="0.7" height="10.3" fill="#efc65c" opacity="0.6"/></svg>
<svg class="r" style="left:21px;top:391px" width="17" height="16" viewBox="0 0 17 16"><g fill="#1a5fe8"><path d="M5 0.6L9 3L5 5.4L1 3Z"/><path d="M12.5 0.6L16.5 3L12.5 5.4L8.5 3Z"/><path d="M12.5 5.6L16.5 8L12.5 10.4L8.5 8Z"/><path d="M5 5.6L9 8L5 10.4L1 8Z"/>
<circle cx="5" cy="10.5" r="4.3"/><path d="M6 10.8L12 8.8L13 11L8 13.2Z"/></g><rect x="3.3" y="10" width="3.6" height="2.8" fill="none" stroke="#fff" stroke-width="0.8"/><path d="M4.1 10V9A1 1 0 0 1 6.1 9V10" fill="none" stroke="#fff" stroke-width="0.7"/></svg>
<svg class="r" style="left:21px;top:421px" width="17" height="14" viewBox="0 0 17 14"><path d="M4 1L15 3.5V11L4 8.5Z" fill="#3fa6e8"/><path d="M4 1L15 3.5V4.5L4 2Z" fill="#2a86c8"/>
<path d="M0.5 12.5L5 10.5L13 11.5L9 13.5Z" fill="#cfd3d8"/></svg>
<svg class="r" style="left:30px;top:485px" width="12" height="16" viewBox="0 0 12 16"><path d="M2 0.8H9.5V11H2Z" fill="#f9dc82"/><path d="M5 0.6H9.5V11H5Z" fill="#f3c95a"/>
<path d="M0.5 13L5.5 10.5L11 13L5.5 15.3Z" fill="#5fb04a"/></svg>
<svg class="r" style="left:221.4px;top:207.1px" width="14" height="14" viewBox="0 0 14 14"><g transform="translate(7 7) rotate(45) scale(0.52)" fill="#7f888f"><path d="M-4.2 -10.5L4.2 -10.5L4.2 -8.6L2.4 -7.4L2.4 -1.2L5.6 2.6L-5.6 2.6L-2.4 -1.2L-2.4 -7.4L-4.2 -8.6Z"/><rect x="-1.1" y="2" width="2.2" height="8.8"/></g></svg>
<svg class="r" style="left:221.4px;top:229.2px" width="14" height="14" viewBox="0 0 14 14"><g transform="translate(7 7) rotate(45) scale(0.52)" fill="#7f888f"><path d="M-4.2 -10.5L4.2 -10.5L4.2 -8.6L2.4 -7.4L2.4 -1.2L5.6 2.6L-5.6 2.6L-2.4 -1.2L-2.4 -7.4L-4.2 -8.6Z"/><rect x="-1.1" y="2" width="2.2" height="8.8"/></g></svg>
<svg class="r" style="left:221.4px;top:251.3px" width="14" height="14" viewBox="0 0 14 14"><g transform="translate(7 7) rotate(45) scale(0.52)" fill="#7f888f"><path d="M-4.2 -10.5L4.2 -10.5L4.2 -8.6L2.4 -7.4L2.4 -1.2L5.6 2.6L-5.6 2.6L-2.4 -1.2L-2.4 -7.4L-4.2 -8.6Z"/><rect x="-1.1" y="2" width="2.2" height="8.8"/></g></svg>
<svg class="r" style="left:221.4px;top:273.4px" width="14" height="14" viewBox="0 0 14 14"><g transform="translate(7 7) rotate(45) scale(0.52)" fill="#7f888f"><path d="M-4.2 -10.5L4.2 -10.5L4.2 -8.6L2.4 -7.4L2.4 -1.2L5.6 2.6L-5.6 2.6L-2.4 -1.2L-2.4 -7.4L-4.2 -8.6Z"/><rect x="-1.1" y="2" width="2.2" height="8.8"/></g></svg>
<svg class="r" style="left:257px;top:198px" width="13" height="15" viewBox="0 0 13 15"><path d="M1.5 0.8H9.5L11.5 2.8V13.6H1.5Z" fill="#f2f3f4" stroke="#9ea3a8" stroke-width="1"/>
<rect x="3" y="4.5" width="7" height="7" fill="#40474d"/><rect x="5" y="8" width="3" height="1" fill="#8e959b"/></svg>
<svg class="r" style="left:0;top:0" width="300" height="260" viewBox="0 0 300 260">
<ellipse cx="262.6" cy="224.6" rx="6" ry="3.7" fill="none" stroke="#a2a6ab" stroke-width="2"/>
<text x="261.8" y="231" font-family="Liberation Sans" font-weight="bold" font-size="11.5" fill="#2a5fa8" stroke="#f4f6f8" stroke-width="0.6" paint-order="stroke">R</text>
<defs><linearGradient id="renv" x1="0" y1="1" x2="1" y2="0"><stop offset="0" stop-color="#4f9fb8"/><stop offset="1" stop-color="#cfeaf0"/></linearGradient></defs>
<path d="M261.5 239.3L268.4 240L268.2 249.1L256.2 248.3Z" fill="url(#renv)"/>
<path d="M268.4 240L269.6 241.5L269.4 249.4L268.2 249.1Z" fill="#f4f6f7" stroke="#a9b1b6" stroke-width="0.5"/>
<path d="M261.5 239.3L268.4 240" stroke="#6c8a96" stroke-width="0.8"/>
</svg>
<svg class="r" style="left:258px;top:258px" width="12" height="15" viewBox="0 0 12 15"><path d="M1.5 0.8H8L10.5 3.3V13.3H1.5Z" fill="#fff" stroke="#a0a5aa" stroke-width="1"/><path d="M8 0.8V3.3H10.5" fill="none" stroke="#a0a5aa" stroke-width="0.8"/></svg>
<svg class="r" style="left:258px;top:278px" width="12" height="15" viewBox="0 0 12 15"><path d="M1.5 0.8H8L10.5 3.3V13.3H1.5Z" fill="#fff" stroke="#a0a5aa" stroke-width="1"/><path d="M8 0.8V3.3H10.5" fill="none" stroke="#a0a5aa" stroke-width="0.8"/><g stroke="#b4b8bd" stroke-width="0.8"><line x1="3" y1="5" x2="9" y2="5"/><line x1="3" y1="7" x2="9" y2="7"/><line x1="3" y1="9" x2="9" y2="9"/><line x1="3" y1="11" x2="9" y2="11"/></g></svg>
<svg class="r" style="left:256px;top:297px" width="16" height="16" viewBox="0 0 16 16"><rect x="0.2" y="0.7" width="7" height="7" fill="#e8472c"/><rect x="7.5" y="0.7" width="7" height="7" fill="#7fba00"/>
<rect x="0.2" y="8" width="7" height="7" fill="#00a4ef"/><rect x="7.5" y="8" width="7" height="7" fill="#f4b400"/>
<rect x="7.5" y="8" width="7" height="7" fill="#c9b25a"/><path d="M9 13.5L13 9.5" stroke="#3c3f6a" stroke-width="1.8"/><circle cx="12.2" cy="10.5" r="1.6" fill="#5a5f8a"/><circle cx="10" cy="12.5" r="1" fill="#e8d27a"/></svg>
<svg class="r" style="left:258.5px;top:319.3px" width="10" height="12.3" viewBox="0 0 10 12.3"><rect x="0" y="0.5" width="9" height="11.3" fill="#fce6a2"/>
<rect x="3.2399999999999998" y="0.4" width="5.76" height="11.3" fill="#f6d574"/>
<rect x="0" y="0" width="9" height="1" fill="#eec766" opacity="0.7"/>
<rect x="5.3999999999999995" y="1" width="0.7" height="10.3" fill="#efc65c" opacity="0.6"/></svg>
<svg class="r" style="left:258.5px;top:359.0px" width="10" height="12.3" viewBox="0 0 10 12.3"><rect x="0" y="0.5" width="9" height="11.3" fill="#fce6a2"/>
<rect x="3.2399999999999998" y="0.4" width="5.76" height="11.3" fill="#f6d574"/>
<rect x="0" y="0" width="9" height="1" fill="#eec766" opacity="0.7"/>
<rect x="5.3999999999999995" y="1" width="0.7" height="10.3" fill="#efc65c" opacity="0.6"/></svg>
<svg class="r" style="left:258.5px;top:378.84999999999997px" width="10" height="12.3" viewBox="0 0 10 12.3"><rect x="0" y="0.5" width="9" height="11.3" fill="#fce6a2"/>
<rect x="3.2399999999999998" y="0.4" width="5.76" height="11.3" fill="#f6d574"/>
<rect x="0" y="0" width="9" height="1" fill="#eec766" opacity="0.7"/>
<rect x="5.3999999999999995" y="1" width="0.7" height="10.3" fill="#efc65c" opacity="0.6"/></svg>
<svg class="r" style="left:258.5px;top:398.7px" width="10" height="12.3" viewBox="0 0 10 12.3"><rect x="0" y="0.5" width="9" height="11.3" fill="#fce6a2"/>
<rect x="3.2399999999999998" y="0.4" width="5.76" height="11.3" fill="#f6d574"/>
<rect x="0" y="0" width="9" height="1" fill="#eec766" opacity="0.7"/>
<rect x="5.3999999999999995" y="1" width="0.7" height="10.3" fill="#efc65c" opacity="0.6"/></svg>
<svg class="r" style="left:258.5px;top:418.55px" width="10" height="12.3" viewBox="0 0 10 12.3"><rect x="0" y="0.5" width="9" height="11.3" fill="#fce6a2"/>
<rect x="3.2399999999999998" y="0.4" width="5.76" height="11.3" fill="#f6d574"/>
<rect x="0" y="0" width="9" height="1" fill="#eec766" opacity="0.7"/>
<rect x="5.3999999999999995" y="1" width="0.7" height="10.3" fill="#efc65c" opacity="0.6"/></svg>
<svg class="r" style="left:258.5px;top:438.40000000000003px" width="10" height="12.3" viewBox="0 0 10 12.3"><rect x="0" y="0.5" width="9" height="11.3" fill="#fce6a2"/>
<rect x="3.2399999999999998" y="0.4" width="5.76" height="11.3" fill="#f6d574"/>
<rect x="0" y="0" width="9" height="1" fill="#eec766" opacity="0.7"/>
<rect x="5.3999999999999995" y="1" width="0.7" height="10.3" fill="#efc65c" opacity="0.6"/></svg>
<svg class="r" style="left:258.5px;top:458.25px" width="10" height="12.3" viewBox="0 0 10 12.3"><rect x="0" y="0.5" width="9" height="11.3" fill="#fce6a2"/>
<rect x="3.2399999999999998" y="0.4" width="5.76" height="11.3" fill="#f6d574"/>
<rect x="0" y="0" width="9" height="1" fill="#eec766" opacity="0.7"/>
<rect x="5.3999999999999995" y="1" width="0.7" height="10.3" fill="#efc65c" opacity="0.6"/></svg>
<svg class="r" style="left:255px;top:337px" width="16" height="15" viewBox="0 0 16 15"><path d="M1 2.5H6L7.5 4H14.5V13.5H1Z" fill="#f6e39a" stroke="#2a2a2a" stroke-width="1"/>
<path d="M1 5.5H14.5" stroke="#c6b26a" stroke-width="0.8"/>
<path d="M3.5 10L6 8H10.5L12 9.5L10.5 11H6Z" fill="#5c5f8a"/><path d="M3 11H7" stroke="#1b1b1b" stroke-width="1.3"/></svg>
<svg class="r" style="left:0;top:0" width="1280" height="538" viewBox="0 0 1280 538"><path d="M422.5 99.6L432.4 120.9L375.1 150.5L378.5 160.1L346.2 148.4L357.2 116.8L362.7 127.5Z" fill="#ed7d31" stroke="#a4521c" stroke-width="1" stroke-linejoin="miter"/></svg>
</body></html>
